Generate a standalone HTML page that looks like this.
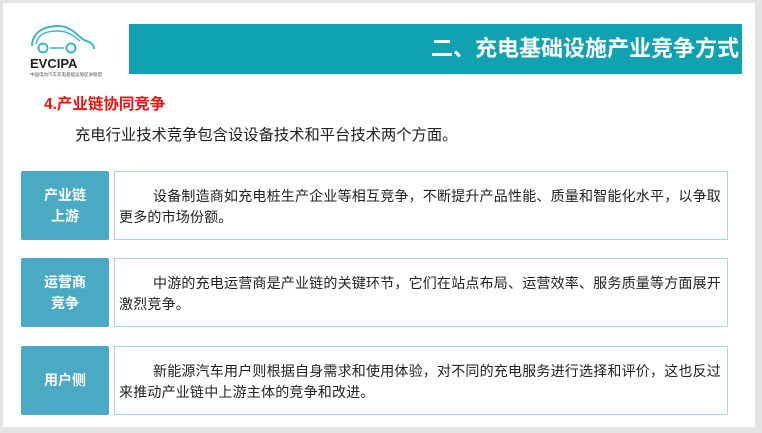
<!DOCTYPE html>
<html><head><meta charset="utf-8"><style>
body{margin:0;width:762px;height:433px;background:#e3e4e6;position:relative;overflow:hidden;font-family:"Liberation Sans","Noto Sans CJK SC",sans-serif}
.slide{position:absolute;left:3px;top:3px;width:752px;height:424px;background:#fff}
.bar{position:absolute;left:129px;top:24px;width:613px;height:50px;background:#10a2b0;color:#fff;font-weight:bold;font-size:22px;line-height:50px;text-align:right;box-sizing:border-box;padding-right:3px}
.h{position:absolute;left:44px;top:92px;color:#f01010;font-weight:bold;font-size:15.5px}
.intro{position:absolute;left:75px;top:123px;font-size:15.3px;color:#222}
.lab{position:absolute;left:21px;width:88px;height:69px;background:#4aaac4;color:#fff;font-weight:bold;font-size:14px;display:flex;align-items:center;justify-content:center;text-align:center;line-height:21px;border-radius:2px}
.txt{position:absolute;left:114px;height:67px;border:1px solid #a8d4e4;font-size:14px;letter-spacing:0.2px;color:#222;line-height:21px;padding:0 0 0 4px;width:608px;white-space:nowrap;overflow:visible}
.txt p{margin:14px 0 0;text-indent:34px}
</style></head><body>
<div class="slide"></div>
<svg style="position:absolute;left:28px;top:22px" width="80" height="56" viewBox="0 0 80 56">
<path d="M4 24 C4 12 14 4 30 4 C42 4 48 12 56 18 C62 20 66 22 66 27" fill="none" stroke="#3bb8c4" stroke-width="2"/>
<path d="M8 22 C10 12 18 9 30 9 C40 9 46 14 52 19" fill="none" stroke="#3bb8c4" stroke-width="1.5"/>
<circle cx="15" cy="26" r="4.5" fill="none" stroke="#3bb8c4" stroke-width="2"/>
<circle cx="43" cy="26" r="4.5" fill="none" stroke="#3bb8c4" stroke-width="2"/>
<path d="M22 26 H36" stroke="#3bb8c4" stroke-width="1.5"/>
<text x="2" y="46" font-family="Liberation Sans" font-weight="bold" font-size="13" fill="#222">EVCIPA</text>
<text x="2" y="54" font-size="4.5" fill="#555" font-family="Noto Sans CJK SC">中国电动汽车充电基础设施促进联盟</text>
</svg>
<div class="bar">二、充电基础设施产业竞争方式</div>
<div class="h">4.产业链协同竞争</div>
<div class="intro">充电行业技术竞争包含设设备技术和平台技术两个方面。</div>
<div class="lab" style="top:171px">产业链<br>上游</div>
<div class="txt" style="top:171px"><p>设备制造商如充电桩生产企业等相互竞争，不断提升产品性能、质量和智能化水平，以争取<br>更多的市场份额。</p></div>
<div class="lab" style="top:258px">运营商<br>竞争</div>
<div class="txt" style="top:258px"><p>中游的充电运营商是产业链的关键环节，它们在站点布局、运营效率、服务质量等方面展开<br>激烈竞争。</p></div>
<div class="lab" style="top:346px">用户侧</div>
<div class="txt" style="top:346px"><p>新能源汽车用户则根据自身需求和使用体验，对不同的充电服务进行选择和评价，这也反过<br>来推动产业链中上游主体的竞争和改进。</p></div>
</body></html>
